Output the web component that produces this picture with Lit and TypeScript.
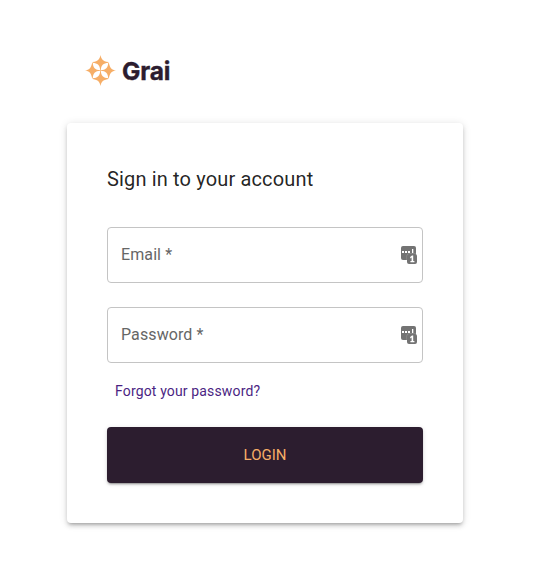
import { LitElement, html, css, svg } from "lit";
import { customElement, property } from "lit/decorators.js";

const star = svg`<path d="M15.5 0C16.4 4.3 17.6 6 23.3 7.1V7.7C18.2 8.2 16.1 9.8 15.8 15.5H15.2C14.9 9.8 12.8 8.2 7.7 7.7V7.1C13.4 6 14.6 4.3 15.5 0Z"/>`;

@customElement("grai-logo")
export class GraiLogo extends LitElement {
  static styles = css`
    :host { display: flex; align-items: center; height: 31px; gap: 6px; }
    .mark { display: block; width: 31px; height: 31px; fill: #f6ae67; }
    .name {
      margin-top: 2px; font: 700 24.5px/31px Inter, sans-serif; letter-spacing: -0.2px;
      color: #2c1d2f; -webkit-text-stroke: 0.4px #2c1d2f;
    }
  `;
  render() {
    return html`
      <svg class="mark" viewBox="0 0 31 31">
        ${[0, 90, 180, 270].map((a) => svg`<g transform="rotate(${a} 15.5 15.5)">${star}</g>`)}
      </svg>
      <span class="name">Grai</span>
    `;
  }
}

@customElement("text-field")
export class TextField extends LitElement {
  @property() label = "";
  static styles = css`
    :host {
      display: flex; align-items: center; justify-content: space-between;
      box-sizing: border-box; height: 56px; padding: 0 4px 0 13px;
      border: 1px solid #c4c4c4; border-radius: 4px;
    }
    .label { margin-bottom: 2px; font: 400 16px/23px Roboto, sans-serif; letter-spacing: 0.1px; color: #666; }
    .key { display: block; width: 18px; height: 20px; }
  `;
  render() {
    return html`
      <span class="label">${this.label} *</span>
      <svg class="key" viewBox="0 0 18 20">
        <rect x="1" y="1" width="15" height="14" rx="2" fill="#737373" />
        <rect x="6.6" y="8.6" width="11" height="11" rx="2.5" fill="#fff" fill-opacity=".3" />
        <rect x="7" y="9" width="10" height="10" rx="2" fill="#737373" />
        <path d="M2 6h2v2h-2zM5 6h2v2h-2zM8 6h2v2h-2zM12 4h1.3v4h-1.3z" fill="#fff" />
        <path d="M10.2 12L12 10.6H13.2V16H14.4V17.3H10.4V16H11.6V12.6L10.2 13.4Z" fill="#fff" />
      </svg>
    `;
  }
}

@customElement("app-root")
export class AppRoot extends LitElement {
  static styles = css`
    :host {
      display: block; box-sizing: border-box; height: 587px; padding: 55px 71px 0 67px;
      background: #fff; font-family: Roboto, sans-serif;
    }
    .logo { margin: 0 0 37px 18px; }
    .card {
      display: flex; flex-direction: column; box-sizing: border-box; height: 400px; padding: 40px;
      border-radius: 4px; background: #fff;
      box-shadow: 0 3px 3px -2px rgba(0,0,0,.2), 0 3px 4px 0 rgba(0,0,0,.14), 0 1px 8px 0 rgba(0,0,0,.12);
    }
    .title {
      margin: 0 0 32px; font-size: 20px; font-weight: 400; line-height: 32px;
      letter-spacing: 0.15px; color: rgba(0,0,0,.87);
    }
    .fields { display: grid; gap: 24px; }
    .forgot {
      align-self: flex-start; margin: 16px 0 0 8px; font-size: 14px; line-height: 24px;
      letter-spacing: 0.15px; color: #4b1f83; text-decoration: none;
    }
    .login {
      height: 56px; margin-top: 24px; padding: 0; border: 0; border-radius: 4px;
      background: #2c1d2f; color: #f6ae67; font: 400 15px/26px Roboto, sans-serif; letter-spacing: 0;
      box-shadow: 0 3px 1px -2px rgba(0,0,0,.2), 0 2px 2px 0 rgba(0,0,0,.14), 0 1px 5px 0 rgba(0,0,0,.12);
    }
  `;
  render() {
    return html`
      <grai-logo class="logo"></grai-logo>
      <main class="card">
        <h1 class="title">Sign in to your account</h1>
        <div class="fields">
          <text-field label="Email"></text-field>
          <text-field label="Password"></text-field>
        </div>
        <a class="forgot" href="#">Forgot your password?</a>
        <button class="login">LOGIN</button>
      </main>
    `;
  }
}
